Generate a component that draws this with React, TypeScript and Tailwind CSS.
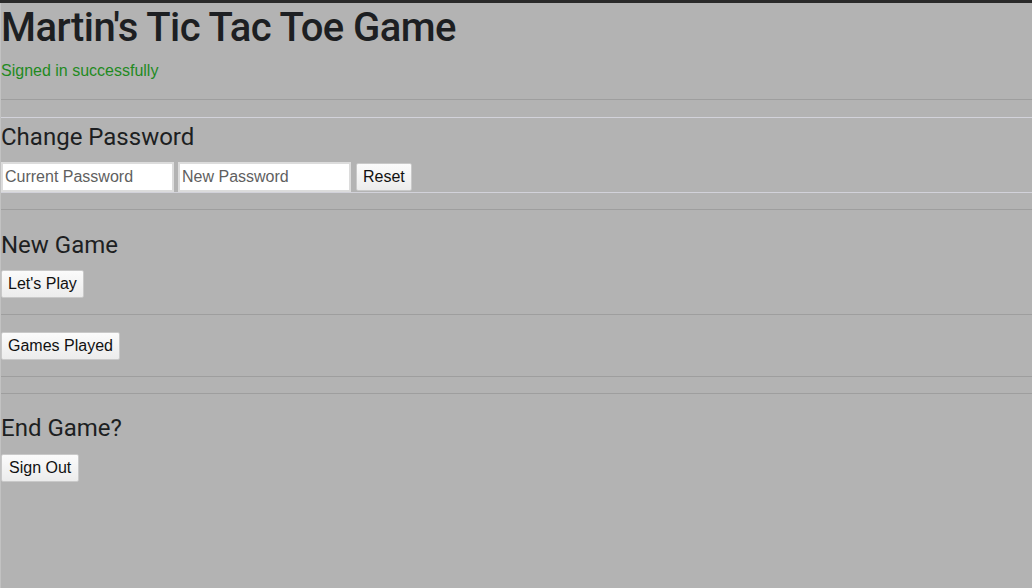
export default function App() {
  const btn =
    'h-[28px] px-[6px] border border-[#c9c9c9] bg-gradient-to-b from-[#fbfbfb] to-[#ececec] text-[16px] leading-none text-[#111] rounded-[2px]';
  const input =
    'w-[173px] h-[30px] px-[2px] bg-white border-[2px] border-[#dcdcdc] text-[16px] text-[#222] placeholder:text-[#5f5f5f] outline-none';
  const heading = "font-['Roboto',sans-serif] text-[24px] leading-[29px] font-normal text-[#1d1f22]";

  return (
    <div className="min-h-[588px] bg-[#b3b3b3] font-['Liberation_Sans',Arial,sans-serif] text-[#212529]">
      <div className="h-[3px] bg-[#2a2a2a]" />
      <main className="border-l border-[#c2c2c2] min-h-[585px]">
        <h1 className="pt-[1px] font-['Roboto',sans-serif] text-[40px] leading-[47px] font-medium tracking-[-0.55px] text-[#1d1f22]">
          Martin's Tic Tac Toe Game
        </h1>
        <p className="mt-[8px] text-[16px] leading-6 text-[#1f8a1f]">Signed in successfully</p>

        <hr className="mt-[16px] border-t border-[#9e9e9e]" />

        <form className="mt-[17px] border-t border-b border-[#d2d2da]">
          <h2 className={`mt-[5px] ${heading}`}>Change Password</h2>
          <div className="mt-[10px] flex items-center gap-[4px]">
            <input className={input} placeholder="Current Password" />
            <input className={input} placeholder="New Password" />
            <button type="button" className={`${btn} ml-[1px]`}>Reset</button>
          </div>
        </form>

        <hr className="mt-[16px] border-t border-[#9e9e9e]" />

        <section>
          <h2 className={`mt-[21px] ${heading}`}>New Game</h2>
          <button type="button" className={`${btn} mt-[10px]`}>Let's Play</button>
        </section>

        <hr className="mt-[16px] border-t border-[#9e9e9e]" />

        <button type="button" className={`${btn} mt-[17px]`}>Games Played</button>

        <hr className="mt-[16px] border-t border-[#9e9e9e]" />
        <hr className="mt-[16px] border-t border-[#9e9e9e]" />

        <section>
          <h2 className={`mt-[20px] ${heading}`}>End Game?</h2>
          <button type="button" className={`${btn} mt-[11px] px-[7px]`}>Sign Out</button>
        </section>
      </main>
    </div>
  );
}
